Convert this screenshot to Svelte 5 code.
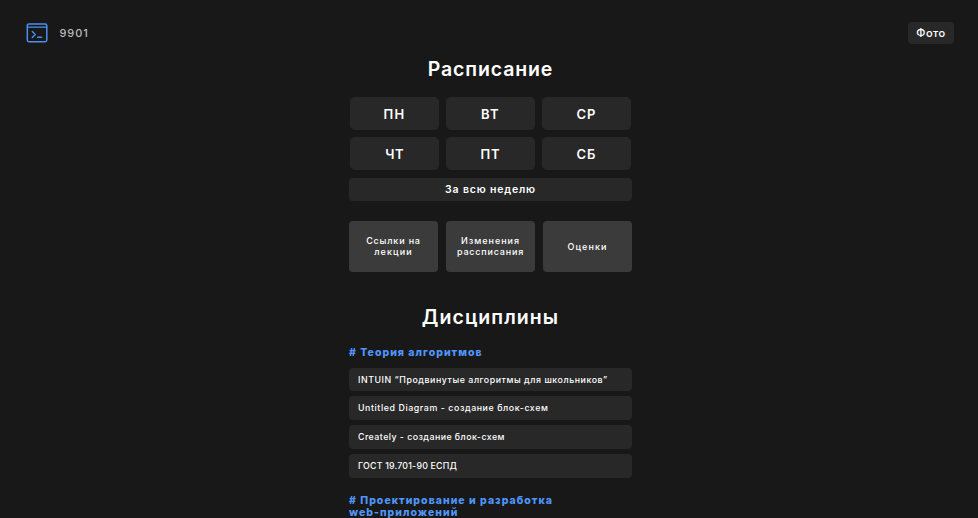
<script>
  const days = [
    { name: 'ПН', tracking: 1.3 },
    { name: 'ВТ', tracking: 1.3 },
    { name: 'СР', tracking: 1 },
    { name: 'ЧТ', tracking: 0.6 },
    { name: 'ПТ', tracking: 0.8 },
    { name: 'СБ', tracking: 1 }
  ];
  const cards = [
    [{ text: 'Ссылки на', tracking: 0.82 }, { text: 'лекции', tracking: 1.1 }],
    [{ text: 'Изменения', tracking: 0.96 }, { text: 'рассписания', tracking: 0.8 }],
    [{ text: 'Оценки', tracking: 1.05 }]
  ];
  const links = [
    { text: 'INTUIN “Продвинутые алгоритмы для школьников”', tracking: 0.56 },
    { text: 'Untitled Diagram - создание блок-схем', tracking: 0.59 },
    { text: 'Creately - создание блок-схем', tracking: 0.46 },
    { text: 'ГОСТ 19.701-90 ЕСПД', tracking: 0.21 }
  ];
</script>

<div class="page">
  <header>
    <a class="brand" href="#top">
      <svg width="22" height="20" viewBox="0 0 22 20" fill="none" stroke="#4a8ff0" stroke-linecap="round" stroke-linejoin="round">
        <rect x="1.3" y="0.9" width="19.5" height="17.9" rx="1.7" stroke-width="1.5" />
        <path d="M1.5 4.1H20.6" stroke-width="1.4" />
        <path d="M6.3 8.6l3 2.9-3 2.9M11.6 14.3h4" stroke-width="1.4" />
      </svg>
      <span>9901</span>
    </a>
    <button class="photo">Фото</button>
  </header>

  <main>
    <h1>Расписание</h1>
    <div class="days">
      {#each days as d}
        <button><span style="letter-spacing:{d.tracking}px">{d.name}</span></button>
      {/each}
    </div>
    <button class="week">За всю неделю</button>

    <div class="cards">
      {#each cards as lines}
        <button>
          {#each lines as l}
            <span style="letter-spacing:{l.tracking}px">{l.text}</span>
          {/each}
        </button>
      {/each}
    </div>

    <h2>Дисциплины</h2>
    <h3>#&nbsp;Теория алгоритмов</h3>
    <div class="links">
      {#each links as l}
        <a href="#link" style="letter-spacing:{l.tracking}px">{l.text}</a>
      {/each}
    </div>
    <h3>#&nbsp;Проектирование и разработка<br />web-приложений</h3>
  </main>
</div>

<style>
  :global(body) {
    background: #181818;
    overflow: hidden;
  }
  .page {
    height: 518px;
    overflow: hidden;
    box-sizing: border-box;
    padding-top: 21px;
    color: #fff;
    font-family: Inter, "Open Sans", sans-serif;
  }
  header {
    display: flex;
    justify-content: space-between;
    align-items: flex-start;
    height: 36px;
    padding: 0 24px 0 26px;
  }
  a {
    color: inherit;
    text-decoration: none;
  }
  button {
    border: 0;
    padding: 0;
    color: inherit;
    font-family: inherit;
    background: #282828;
    border-radius: 4px;
  }
  .brand {
    display: flex;
    align-items: center;
    gap: 11.4px;
    height: 23px;
    color: #bcbcbc;
    font-size: 11px;
    font-weight: 500;
    letter-spacing: 1px;
  }
  .photo {
    width: 46px;
    height: 22.5px;
    margin-top: 0.5px;
    font-size: 11px;
    font-weight: 500;
    letter-spacing: 0.5px;
  }
  main {
    width: 283px;
    margin: 0 auto 0 349px;
  }
  h1,
  h2 {
    margin: 0;
    font-size: 19.5px;
    line-height: 24px;
    font-weight: 600;
    text-align: center;
    letter-spacing: 0.85px;
  }
  h2 {
    letter-spacing: 1.05px;
    margin-bottom: 17.5px;
  }
  .days {
    display: grid;
    grid-template-columns: repeat(3, 88.6px);
    grid-auto-rows: 33px;
    gap: 7.3px;
    justify-content: center;
    margin: 16px 0 7.7px;
  }
  .days button {
    font-size: 13px;
    font-weight: 600;
    border-radius: 5px;
  }
  .week {
    display: block;
    width: 100%;
    height: 23px;
    font-size: 10.5px;
    font-weight: 600;
    letter-spacing: 0.82px;
  }
  .cards {
    display: flex;
    justify-content: space-between;
    margin: 20.2px 0 33px;
  }
  .cards button {
    display: flex;
    flex-direction: column;
    align-items: center;
    justify-content: center;
    box-sizing: border-box;
    width: 89px;
    height: 50.6px;
    padding-top: 1.4px;
    background: #3b3b3b;
    font-size: 9px;
    line-height: 10.8px;
    font-weight: 500;
  }
  h3 {
    margin: 0;
    padding-top: 0.8px;
    color: #5096fa;
    font-size: 10.5px;
    line-height: 12.5px;
    font-weight: 800;
    letter-spacing: 1.03px;
    white-space: nowrap;
  }
  .links {
    display: flex;
    flex-direction: column;
    gap: 5.2px;
    margin: 8px 0 16px;
  }
  .links a {
    height: 23.7px;
    box-sizing: border-box;
    padding-left: 9px;
    background: #282828;
    border-radius: 4px;
    font-size: 8.8px;
    line-height: 23.2px;
    font-weight: 500;
    white-space: nowrap;
  }
</style>
